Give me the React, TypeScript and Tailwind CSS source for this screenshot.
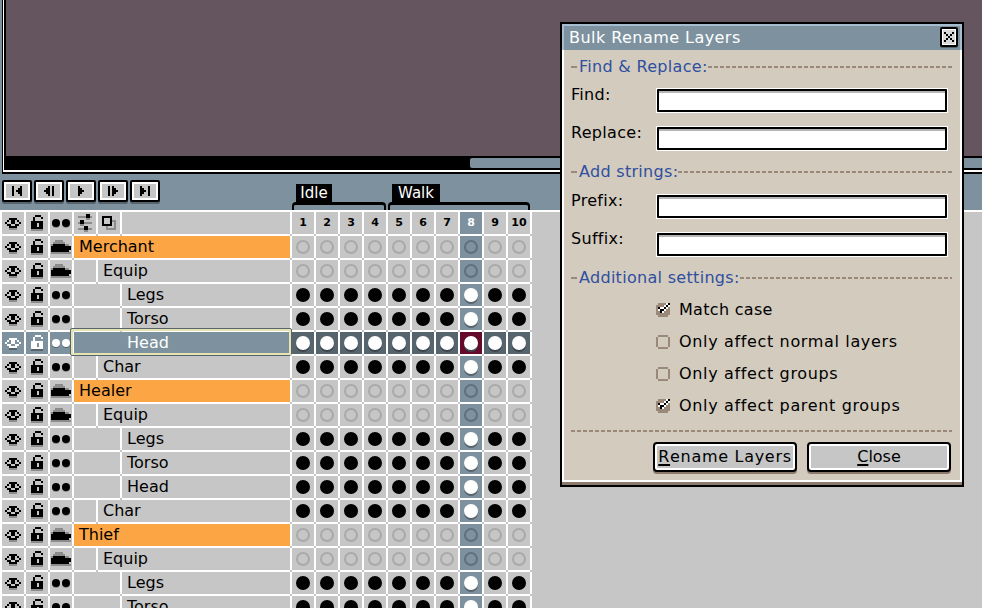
import type { ReactNode } from "react";

const FONT = "font-['DejaVu_Sans','Liberation_Sans',sans-serif]";

const EYE = ["..XXXX..", ".X.XX.X.", "X..XX..X", ".XX..XX.", "..XXXX..", "..ssss.."];
const LOCK = ["..XXX.", ".X...X", ".X....", "XXXXXX", "XXX.XX", "XXX.XX", "XXXXXX", "ssssss"];
const FOLDER = ["..ssss....", ".ssssss...", "sXXXXXXss.", "XXXXXXXXXX", "XXXXXXXXXX", "XXXXXXXXX.", "ssssssssss"];
const SLIDERS = ["....XX.", "ssssXXs", "....ss.", ".XX....", "sXXssss", ".ss....", "...XX..", "sssXXss", "...ss.."];
const SQUARES = ["XXXXX..", "X...X..", "X...Xss", "X...X.s", "XXXXX.s", "..s...s", "..sssss"];
const CHECKED = [".bbbbWX", "bbbbWXW", "bXWWXWb", "bWXXWbb", "bbXWbbb", "bbbbbbb", ".bbbbb."];
const UNCHECKED = [".bbbbb.", "b.....b", "b.....b", "b.....b", "b.....b", "b.....b", ".bbbbb."];
const CLOSE_X = ["X...X", ".X.X.", "..X..", ".X.X.", "X...X"];

const TRANSPORT = [
  ["X...X", "X..XX", "X.XXX", "X..XX", "X...X"],
  ["..X.X", ".XX.X", "XXX.X", ".XX.X", "..X.X"],
  ["X..", "XX.", "XXX", "XX.", "X.."],
  ["X.X..", "X.XX.", "X.XXX", "X.XX.", "X.X.."],
  ["X...X", "XX..X", "XXX.X", "XX..X", "X...X"],
];

type Layer = { name: string; depth: number; group?: boolean; selected?: boolean };

const character = (name: string, selected = false): Layer[] => [
  { name, depth: 0, group: true },
  { name: "Equip", depth: 1, group: true },
  { name: "Legs", depth: 2 },
  { name: "Torso", depth: 2 },
  { name: "Head", depth: 2, selected },
  { name: "Char", depth: 1 },
];

const layers: Layer[] = [...character("Merchant", true), ...character("Healer"), ...character("Thief")].slice(0, 16);
const frames = [1, 2, 3, 4, 5, 6, 7, 8, 9, 10];

function Pixels({ map, colors, size = 2, className = "" }: { map: string[]; colors: Record<string, string>; size?: number; className?: string }) {
  const width = Math.max(...map.map((r) => r.length));
  return (
    <svg width={width * size} height={map.length * size} shapeRendering="crispEdges" className={`block shrink-0 ${className}`}>
      {map.flatMap((row, y) =>
        row.split("").map((c, x) =>
          colors[c] ? <rect key={`${x}-${y}`} x={x * size} y={y * size} width={size} height={size} fill={colors[c]} /> : null,
        ),
      )}
    </svg>
  );
}

function Cell({ className = "", children }: { className?: string; children?: ReactNode }) {
  return (
    <div className={`relative h-[22px] shrink-0 flex items-center justify-center ${className}`}>
      {children}
      <span className="absolute -right-[2px] -bottom-[2px] w-[2px] h-[2px] bg-[#c6c6c6]" />
    </div>
  );
}

function SectionHead({ label }: { label: string }) {
  return (
    <div className="h-5 flex items-center">
      <span className="w-[6px] h-[2px] bg-[#9a8878]" />
      <span className="ml-[2px] text-[#2f4f9f] text-[16px] tracking-[0.3px] whitespace-nowrap">{label}</span>
      <span className="flex-1 h-[2px] bg-[repeating-linear-gradient(90deg,#9a8878_0_4px,transparent_4px_6px)]" />
    </div>
  );
}

function Field({ label, className = "" }: { label: string; className?: string }) {
  return (
    <div className={`flex ${className}`}>
      <span className="w-[85px] -mt-[4px] text-[16px] leading-[22px] tracking-[0.3px] text-black">{label}</span>
      <div className="w-[292px] h-[25px] border border-white">
        <div className="h-full border-2 border-black rounded-[1px] bg-white shadow-[inset_0_2px_0_#b5b5b5]" />
      </div>
    </div>
  );
}

function Check({ label, checked, className = "tracking-[0.65px]" }: { label: string; checked?: boolean; className?: string }) {
  return (
    <div className="h-8 flex items-center pl-[85px]">
      <Pixels map={checked ? CHECKED : UNCHECKED} colors={{ b: "#9a8878", X: "#000000", W: "#ffffff" }} />
      <span className={`ml-[9px] text-[16px] text-black whitespace-nowrap ${className}`}>{label}</span>
    </div>
  );
}

function DialogButton({ first, rest, className = "" }: { first: string; rest: string; className?: string }) {
  return (
    <button className={`w-[144px] h-[30px] border-2 border-black rounded-[4px] bg-[#c6c6c6] text-[16px] text-black whitespace-nowrap shadow-[inset_0_0_0_2px_#ffffff,0_2px_0_#8c7a6c] flex items-center justify-center ${className}`}>
      <span className="underline decoration-2 underline-offset-2">{first}</span>
      <span>{rest}</span>
    </button>
  );
}

function DotPair({ dark }: { dark?: boolean }) {
  const dot = dark
    ? "block w-2 h-2 rounded-full bg-black shadow-[0_1px_0_#8c8c8c]"
    : "block w-2 h-2 rounded-full bg-white shadow-[0_1px_0_#56646e]";
  return (
    <span className="flex gap-[2px]">
      <span className={dot} />
      <span className={dot} />
    </span>
  );
}

export default function App() {
  const icon = { X: "#000000", s: "#8c8c8c" };
  const iconSelected = { X: "#ffffff", s: "#56646e" };

  return (
    <div className={`relative w-[982px] h-[608px] overflow-hidden bg-[#c6c6c6] ${FONT}`}>
      {/* Canvas */}
      <div className="h-[174px] bg-[#7d929e] pl-[2px]">
        <div className="h-full border-l border-b-2 border-black">
          <div className="h-full border-l border-b-2 border-white">
            <div className="h-full border-l-2 border-black flex flex-col">
              <div className="flex-1 bg-[#65555f]" />
              <div className="h-[14px] bg-black pt-[2px] flex justify-end">
                <div className="w-[512px] h-[10px] rounded-l-[2px] bg-[#7d929e]" />
              </div>
            </div>
          </div>
        </div>
      </div>

      {/* Transport and tags */}
      <div className="h-9 bg-[#7d929e] flex">
        <div className="pl-[2px] pt-[6px] flex gap-[2px] w-[292px]">
          {TRANSPORT.map((map, i) => (
            <button
              key={i}
              className="w-[30px] h-[22px] border-2 border-black rounded-[2px] bg-[#c6c6c6] shadow-[inset_0_0_0_2px_#ffffff,0_2px_0_#56646e] flex items-center justify-center"
            >
              <Pixels map={map} colors={icon} />
            </button>
          ))}
        </div>
        <div className="w-[96px] pt-[10px] flex flex-col">
          <div className="ml-1 w-9 h-[18px] bg-black text-white text-[15px] leading-[18px] text-center">Idle</div>
          <div className="mr-[2px] flex-1 border-t-[3px] border-x-2 border-black rounded-t-[4px]" />
        </div>
        <div className="w-[142px] pt-[10px] flex flex-col">
          <div className="ml-1 w-12 h-[18px] bg-black text-white text-[15px] leading-[18px] text-center">Walk</div>
          <div className="flex-1 border-t-[3px] border-x-2 border-black rounded-t-[4px]" />
        </div>
      </div>

      {/* Timeline */}
      <div className="h-[2px] bg-white" />
      <div className="w-[532px] bg-white text-black">
        <div className="flex gap-[2px] pl-[2px] pb-[2px]">
          <Cell className="w-[22px] bg-[#c6c6c6]"><Pixels map={EYE} colors={icon} className="translate-y-px" /></Cell>
          <Cell className="w-[22px] bg-[#c6c6c6]"><Pixels map={LOCK} colors={icon} /></Cell>
          <Cell className="w-[22px] bg-[#c6c6c6]"><DotPair dark /></Cell>
          <Cell className="w-[22px] bg-[#c6c6c6]"><Pixels map={SLIDERS} colors={icon} /></Cell>
          <Cell className="w-[22px] bg-[#c6c6c6]"><Pixels map={SQUARES} colors={icon} /></Cell>
          <Cell className="w-[168px] bg-[#c6c6c6]" />
          {frames.map((f) => (
            <Cell key={f} className={`w-[22px] text-[11px] font-bold ${f === 8 ? "bg-[#7d929e] text-white" : "bg-[#c6c6c6]"}`}>
              {f}
            </Cell>
          ))}
        </div>

        {layers.map((layer, i) => {
          const sel = layer.selected;
          const side = sel ? iconSelected : icon;
          const sideBg = sel ? "bg-[#7d929e]" : "bg-[#c6c6c6]";
          const nameBg = layer.depth === 0 ? "bg-[#fba544]" : sideBg;
          return (
            <div key={i} className="flex gap-[2px] pl-[2px] pb-[2px]">
              <Cell className={`w-[22px] ${sideBg}`}><Pixels map={EYE} colors={side} className="translate-y-px" /></Cell>
              <Cell className={`w-[22px] ${sideBg}`}><Pixels map={LOCK} colors={side} /></Cell>
              <Cell className={`w-[22px] ${sideBg}`}>
                {layer.group ? <Pixels map={FOLDER} colors={side} /> : <DotPair dark={!sel} />}
              </Cell>
              {layer.depth > 0 && !sel && (
                <Cell className={`${layer.depth === 2 ? "w-[46px]" : "w-[22px]"} ${sideBg}`} />
              )}
              {sel ? (
                <Cell className={`w-[216px] ${nameBg} justify-start! pl-[53px] text-[16px] text-white`}>
                  {layer.name}
                  <span className="absolute -left-[3px] -top-[3px] -right-[1px] -bottom-[1px] border-2 border-[#e6e4b0] outline outline-[#56646e] rounded-[1px]" />
                </Cell>
              ) : (
                <Cell
                  className={`${layer.depth === 0 ? "w-[216px]" : layer.depth === 1 ? "w-[192px]" : "w-[168px]"} ${nameBg} justify-start! pl-[5px] text-[16px] text-black`}
                >
                  {layer.name}
                </Cell>
              )}
              {frames.map((f) => {
                const current = f === 8;
                const bg = sel ? (current ? "bg-[#650a2a]" : "bg-[#56646e]") : current ? "bg-[#7d929e]" : "bg-[#c6c6c6]";
                return (
                  <Cell key={f} className={`w-[22px] ${bg}`}>
                    {layer.group ? (
                      <span className={`block w-[14px] h-[14px] rounded-full border-2 ${current ? "border-[#5f707c]" : "border-[#a9a9a9]"}`} />
                    ) : sel ? (
                      <span className="block w-[14px] h-[14px] rounded-full bg-white shadow-[0_2px_0_#3c464d]" />
                    ) : current ? (
                      <span className="block w-[14px] h-[14px] rounded-full bg-white shadow-[0_2px_0_#56646e]" />
                    ) : (
                      <span className="block w-[14px] h-[14px] rounded-full bg-black" />
                    )}
                  </Cell>
                );
              })}
            </div>
          );
        })}
      </div>

      {/* Bulk rename dialog */}
      <div className="absolute left-[560px] top-[22px] w-[404px] h-[465px] border-2 border-black bg-[#8c7a6c]">
        <div className="h-[458px] border-x-2 border-b-2 border-white bg-[#d3cbbe] flex flex-col">
          <div className="h-[26px] shrink-0 -mx-[2px] border-t-2 border-x-2 border-[#a6bdd0] bg-[#7d929e] flex items-center justify-between pl-[5px] pr-[2px]">
            <span className="text-white text-[16px] tracking-[0.45px]">Bulk Rename Layers</span>
            <button className="w-[18px] h-[20px] mb-[2px] border-2 border-black rounded-[2px] bg-[#d8d8d8] shadow-[inset_0_0_0_1px_#ffffff,0_1px_0_#56646e] flex items-center justify-center">
              <Pixels map={CLOSE_X} colors={{ X: "#000000" }} />
            </button>
          </div>

          <div className="flex-1 pl-[7px] pr-2 pt-[7px]">
            <SectionHead label="Find & Replace:" />
            <Field label="Find:" className="mt-[11px]" />
            <Field label="Replace:" className="mt-[13px]" />
            <div className="mt-[11px]"><SectionHead label="Add strings:" /></div>
            <Field label="Prefix:" className="mt-3" />
            <Field label="Suffix:" className="mt-[13px]" />
            <div className="mt-[11px]"><SectionHead label="Additional settings:" /></div>
            <div className="mt-[6px]">
              <Check label="Match case" checked className="tracking-[0.3px]" />
              <Check label="Only affect normal layers" />
              <Check label="Only affect groups" />
              <Check label="Only affect parent groups" checked />
            </div>
            <div className="mt-[8px] h-[2px] bg-[repeating-linear-gradient(90deg,#9a8878_0_4px,transparent_4px_6px)]" />
            <div className="mt-[10px] flex gap-[10px] pl-[82px]">
              <DialogButton first="R" rest="ename Layers" className="tracking-[0.7px]" />
              <DialogButton first="C" rest="lose" />
            </div>
          </div>
        </div>
      </div>
    </div>
  );
}
